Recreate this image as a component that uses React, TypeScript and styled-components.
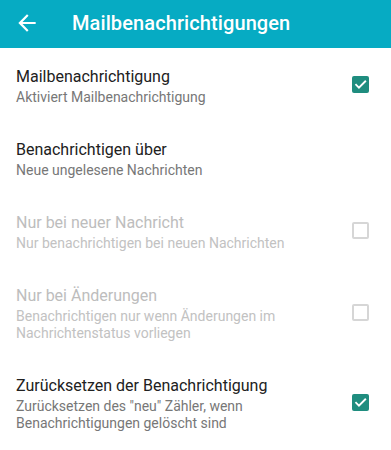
import React from "react";
import styled, { createGlobalStyle } from "styled-components";

const Global = createGlobalStyle`
  html, body { margin: 0; padding: 0; background: #ffffff; }
  body { font-family: Roboto, "Noto Sans", "Liberation Sans", sans-serif; -webkit-font-smoothing: antialiased; }
  * { box-sizing: border-box; }
`;

const Page = styled.div`
  width: 391px;
  height: 450px;
  overflow: hidden;
  background: #ffffff;
  display: flex;
  flex-direction: column;
`;

const Toolbar = styled.header`
  height: 48px;
  flex: 0 0 48px;
  background: #06abc3;
  display: flex;
  align-items: center;
  padding-left: 14px;
`;

const BackButton = styled.button`
  width: 26px;
  height: 26px;
  padding: 0;
  border: none;
  background: transparent;
  display: flex;
  align-items: center;
  justify-content: center;
  margin-right: 32px;
  margin-top: -2px;
  color: #ffffff;
`;

const Title = styled.h1`
  margin: 0;
  font-family: Roboto, "Noto Sans", sans-serif;
  font-weight: 500;
  font-size: 20px;
  color: #ffffff;
  letter-spacing: 0.1px;
  margin-top: -2px;
`;

const List = styled.div`
  display: flex;
  flex-direction: column;
  padding-top: 1px;
`;

const Row = styled.div`
  display: flex;
  align-items: center;
  padding: 16px 22px 16px 16px;
`;

const Texts = styled.div`
  flex: 1;
  display: flex;
  flex-direction: column;
  padding-right: 40px;
`;

const RowTitle = styled.div<{ $disabled?: boolean }>`
  font-size: 16px;
  line-height: 24px;
  color: ${(p) => (p.$disabled ? "#bdbdbd" : "#212121")};
`;

const RowSub = styled.div<{ $disabled?: boolean }>`
  font-size: 14px;
  line-height: 17px;
  color: ${(p) => (p.$disabled ? "#c2c2c2" : "#777777")};
`;

const Box = styled.div<{ $checked?: boolean; $disabled?: boolean }>`
  width: 17px;
  height: 17px;
  flex: 0 0 17px;
  margin-top: -2px;
  border-radius: 2px;
  display: flex;
  align-items: center;
  justify-content: center;
  background: ${(p) => (p.$checked ? "#1f8d7f" : "transparent")};
  border: ${(p) => (p.$checked ? "none" : `2px solid ${p.$disabled ? "#d6d6d6" : "#757575"}`)};
`;

type Item = { title: string; sub: string[]; checkbox?: "on" | "off"; disabled?: boolean };

const items: Item[] = [
  { title: "Mailbenachrichtigung", sub: ["Aktiviert Mailbenachrichtigung"], checkbox: "on" },
  { title: "Benachrichtigen über", sub: ["Neue ungelesene Nachrichten"] },
  { title: "Nur bei neuer Nachricht", sub: ["Nur benachrichtigen bei neuen Nachrichten"], checkbox: "off", disabled: true },
  {
    title: "Nur bei Änderungen",
    sub: ["Benachrichtigen nur wenn Änderungen im", "Nachrichtenstatus vorliegen"],
    checkbox: "off",
    disabled: true,
  },
  {
    title: "Zurücksetzen der Benachrichtigung",
    sub: ['Zurücksetzen des "neu" Zähler, wenn', "Benachrichtigungen gelöscht sind"],
    checkbox: "on",
  },
];

const Check = () => (
  <svg width="15" height="15" viewBox="0 0 24 24">
    <path d="M5 12.5l4.5 4.5L19.5 7" fill="none" stroke="#ffffff" strokeWidth="3" strokeLinecap="square" />
  </svg>
);

export default function App() {
  return (
    <Page>
      <Global />
      <Toolbar>
        <BackButton aria-label="Zurück">
          <svg width="26" height="26" viewBox="0 0 24 24">
            <path fill="#ffffff" d="M20 11H7.83l5.59-5.59L12 4l-8 8 8 8 1.41-1.41L7.83 13H20v-2z" />
          </svg>
        </BackButton>
        <Title>Mailbenachrichtigungen</Title>
      </Toolbar>
      <List>
        {items.map((it) => (
          <Row key={it.title}>
            <Texts>
              <RowTitle $disabled={it.disabled}>{it.title}</RowTitle>
              {it.sub.map((s) => (
                <RowSub key={s} $disabled={it.disabled}>
                  {s}
                </RowSub>
              ))}
            </Texts>
            {it.checkbox && (
              <Box $checked={it.checkbox === "on"} $disabled={it.disabled}>
                {it.checkbox === "on" && <Check />}
              </Box>
            )}
          </Row>
        ))}
      </List>
    </Page>
  );
}
